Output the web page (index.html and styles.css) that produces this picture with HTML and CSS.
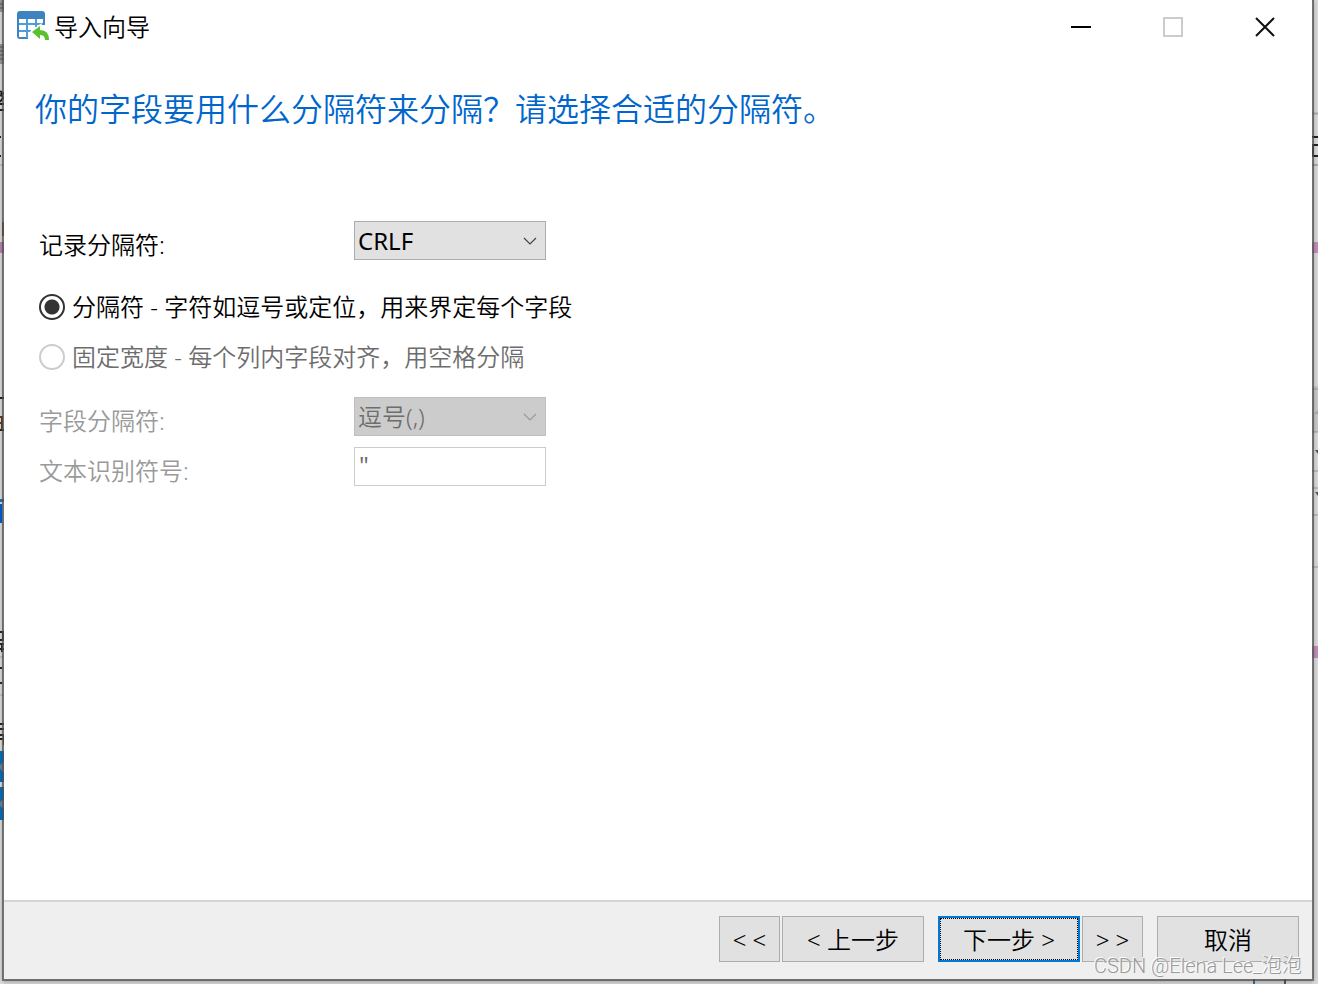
FILE: index.html
```html
<!DOCTYPE html>
<html lang="zh-CN">
<head>
<meta charset="utf-8">
<meta name="viewport" content="width=device-width, initial-scale=1">
<title>导入向导</title>
<link rel="stylesheet" href="styles.css">
</head>
<body>
<svg class="behind behind-left" width="4" height="984" aria-hidden="true">
  <rect width="4" height="984" fill="#dcdcd9"/>
  <path d="M0 0h4v12H0zM0 44h4v20H0z" fill="#999"/>
  <path d="M0 4h3M0 8h3M0 47h4M0 51h4M0 55h4M0 59h4" stroke="#555"/>
  <path d="M0 91l3 2M0 96l4-3M1 93l2 5-3 4M0 104h4M0 110h4M0 137h1M0 156h1M0 398h4M0 430h4" stroke="#222" stroke-width="2" fill="none"/>
  <path d="M0 165h4M0 657h4M0 695h4" stroke="#aaa"/>
  <path d="M3 222v14" stroke="#7a4a28" stroke-width="2"/>
  <rect y="242" width="4" height="11" fill="#b884b3"/>
  <path d="M2 416v14M0 417h3M0 423h3" stroke="#643b24" stroke-width="2"/>
  <rect y="499" width="4" height="3" fill="#1979bf"/>
  <rect y="504" width="2" height="19" fill="#005fd3"/>
  <path d="M0 632h3v8H0M0 644h4M0 649h4M2 643v9M0 668h2M0 683h2M0 724h4M0 729h4M0 735h4v10M0 739h4" stroke="#292929" stroke-width="2" fill="none"/>
  <rect y="751" width="4" height="31" fill="#0070c4"/>
  <rect y="787" width="4" height="33" fill="#0070c4"/>
  <circle cx="5" cy="767" r="5" fill="#789"/>
  <circle cx="5" cy="804" r="5" fill="#789"/>
</svg>
<svg class="behind behind-right" width="6" height="984" aria-hidden="true">
  <rect width="6" height="984" fill="#d8d8d8"/>
  <path d="M0 113.500h6M0 165h6" stroke="#aaa" stroke-width="2"/>
  <path d="M0 137h6M6 145H1v11h5" stroke="#222" stroke-width="2" fill="none"/>
  <rect y="242" width="6" height="11" fill="#c08cbb"/>
  <rect y="386" width="6" height="46" fill="#c8c8c8"/>
  <path d="M0 389h6M0 432h6M0 471h6M0 488h6M0 515h6M0 567h6" stroke="#999"/>
  <path d="M2 414l4-4v4z" fill="#aaa"/>
  <path d="M3 450h3v4zM3 492h3v4z" fill="#555"/>
  <rect y="646" width="6" height="12" fill="#c08cbb"/>
</svg>
<svg class="behind behind-bottom" width="66" height="5" aria-hidden="true">
  <path d="M2 0v5" stroke="#316b9b" stroke-width="2"/>
  <rect x="3" width="29" height="5" fill="#c9c9c9"/>
  <path d="M33 0v5" stroke="#555" stroke-width="2"/>
</svg>
<main class="window">
  <header class="titlebar">
    <svg class="app-icon" width="34" height="32" viewBox="0 0 34 32" aria-hidden="true">
      <path d="M3 1h22a3 3 0 0 1 3 3v5H0V4a3 3 0 0 1 3-3z" fill="#3d83bf"/>
      <path d="M0 9h2v18h9v2H3a3 3 0 0 1-3-3zM26 9h2v6h-2z" fill="#3d83bf"/>
      <path d="M2 14h24M2 21h12M10 9v19M19 9v8" stroke="#4f9bdb" stroke-width="2"/>
      <path d="M15 22l8-6v4q9 0 9 10h-4q0-5-5-5v4z" fill="#58c12b" stroke="#fff" stroke-width="3" paint-order="stroke"/>
    </svg>
    <h1 class="title">导入向导</h1>
    <div class="window-controls">
      <button class="control" type="button" aria-label="最小化"><svg width="20" height="20" viewBox="0 0 20 20"><path d="M0 10h20" stroke="#000" stroke-width="2"/></svg></button>
      <button class="control" type="button" aria-label="最大化" disabled><svg width="20" height="20" viewBox="0 0 20 20"><path d="M1 1h18v18H1z" fill="none" stroke="#ccc" stroke-width="2"/></svg></button>
      <button class="control" type="button" aria-label="关闭"><svg width="20" height="20" viewBox="0 0 20 20"><path d="M1 1l18 18M19 1L1 19" stroke="#111" stroke-width="2"/></svg></button>
    </div>
  </header>
  <form class="wizard">
    <div class="content">
      <h2 class="question">你的字段要用什么分隔符来分隔？请选择合适的分隔符。</h2>
      <div class="row">
        <label class="label" for="record">记录分隔符:</label>
        <div class="combo">
          <select id="record" class="field select"><option>CRLF</option></select>
          <svg class="arrow" width="14" height="8" viewBox="0 0 14 8" aria-hidden="true"><path d="M1 1l6 6 6-6" fill="none" stroke="#444" stroke-width="1.200"/></svg>
        </div>
      </div>
      <div class="choices">
        <label class="choice"><input class="radio" type="radio" name="mode" checked>分隔符 - 字符如逗号或定位，用来界定每个字段</label>
        <label class="choice choice-off"><input class="radio" type="radio" name="mode" disabled>固定宽度 - 每个列内字段对齐，用空格分隔</label>
      </div>
      <div class="fields">
        <div class="row row-off">
          <label class="label" for="separator">字段分隔符:</label>
          <div class="combo">
            <select id="separator" class="field select" disabled><option>逗号(,)</option></select>
            <svg class="arrow" width="14" height="8" viewBox="0 0 14 8" aria-hidden="true"><path d="M1 1l6 6 6-6" fill="none" stroke="#999" stroke-width="1.200"/></svg>
          </div>
        </div>
        <div class="row row-off">
          <label class="label" for="qualifier">文本识别符号:</label>
          <input id="qualifier" class="field text" type="text" value="&quot;" disabled>
        </div>
      </div>
    </div>
    <footer class="footer">
      <div class="group">
        <button class="button small" type="button">&lt; &lt;</button>
        <button class="button" type="button">&lt; 上一步</button>
      </div>
      <div class="group">
        <button class="button primary" type="button">下一步 &gt;</button>
        <button class="button small" type="button">&gt; &gt;</button>
      </div>
      <button class="button" type="button">取消</button>
    </footer>
  </form>
</main>
<div class="watermark">CSDN @Elena Lee_泡泡</div>
</body>
</html>
```
FILE: styles.css
```css
* { box-sizing: border-box; }

body {
  position: relative;
  display: flex;
  min-height: 100vh;
  margin: 0;
  padding: 0 4px 3px 2px;
  overflow: hidden;
  background: #cfcfcf;
  color: #000;
  font: 350 24px/32px "Noto Sans", "Noto Sans CJK SC", sans-serif;
}

.behind { position: absolute; }
.behind-left { top: 0; left: 0; }
.behind-right { top: 0; right: 0; }
.behind-bottom { bottom: 0; right: 0; }

.window {
  position: relative;
  display: flex;
  flex: 1;
  flex-direction: column;
  border: 2px solid rgba(80, 80, 80, 0.75);
  border-top: 0;
  background: #fff;
  background-clip: padding-box;
  box-shadow: 0 0 4px rgba(0, 0, 0, 0.25);
}

.titlebar {
  display: flex;
  align-items: center;
  height: 54px;
  padding: 0 1px 0 13px;
}

.app-icon { margin-bottom: 2px; }

.title {
  flex: 1;
  margin: 0 0 0 3px;
  font-size: 24px;
  font-weight: 350;
}

.window-controls { display: flex; }

.control {
  display: flex;
  align-items: center;
  justify-content: center;
  width: 92px;
  height: 54px;
  padding: 0;
  border: 0;
  background: none;
}

.wizard {
  display: flex;
  flex: 1;
  flex-direction: column;
}

.content {
  flex: 1;
  padding: 31px 31px 24px;
}

.question {
  margin: 0 0 88px;
  color: #0066cc;
  font-size: 32px;
  font-weight: 350;
  line-height: 48px;
}

.row {
  display: grid;
  grid-template-columns: 315px 192px;
  padding-left: 4px;
}

.row-off { color: #9a9a9a; }

.label { padding-top: 8px; }

.combo {
  position: relative;
  height: 39px;
}

.field {
  display: block;
  width: 100%;
  height: 39px;
  border: 1px solid #adadad;
  border-radius: 0;
  color: #000;
  font: inherit;
  font-weight: 400;
  opacity: 1;
}

.select {
  appearance: none;
  padding: 0 32px 0 3px;
  background: #e1e1e1;
}

.select:disabled {
  border-color: #bfbfbf;
  background: #ccc;
  color: #6d6d6d;
  font-weight: 350;
}

.text {
  padding: 0 4px 4px;
  border-color: #ccc;
  background: #fff;
  color: #6d6d6d;
}

.arrow {
  position: absolute;
  top: 16px;
  right: 9px;
  pointer-events: none;
}

.choices {
  display: grid;
  gap: 18px;
  margin: 30px 0 24px;
  padding-left: 4px;
}

.choice {
  display: flex;
  align-items: center;
  gap: 7px;
}

.choice-off { color: #6d6d6d; }

.radio {
  appearance: none;
  width: 26px;
  height: 26px;
  margin: 0;
  border: 2px solid #333;
  border-radius: 50%;
  background: #fff;
}

.radio:checked { background: radial-gradient(circle, #333 7px, #fff 8px); }
.radio:disabled { border-color: #ccc; }

.fields {
  display: grid;
  gap: 10px;
}

.footer {
  display: flex;
  justify-content: flex-end;
  gap: 14px;
  padding: 14px 13px 17px;
  border-top: 2px solid #d5d5d5;
  background: #efefef;
}

.group {
  display: flex;
  gap: 2px;
}

.button {
  width: 142px;
  height: 46px;
  padding: 2px 0 0;
  border: 1px solid #adadad;
  background: #e1e1e1;
  color: #000;
  font: inherit;
}

.small { width: 61px; }

.primary {
  border: 2px solid #0078d7;
  outline: 1px dotted #000;
  outline-offset: -3px;
}

.watermark {
  position: absolute;
  right: 16px;
  bottom: 6px;
  color: #999;
  font: 300 20px/24px Roboto, "Noto Sans CJK SC", sans-serif;
  text-shadow: -1px -1px 0 #fff;
}
```
